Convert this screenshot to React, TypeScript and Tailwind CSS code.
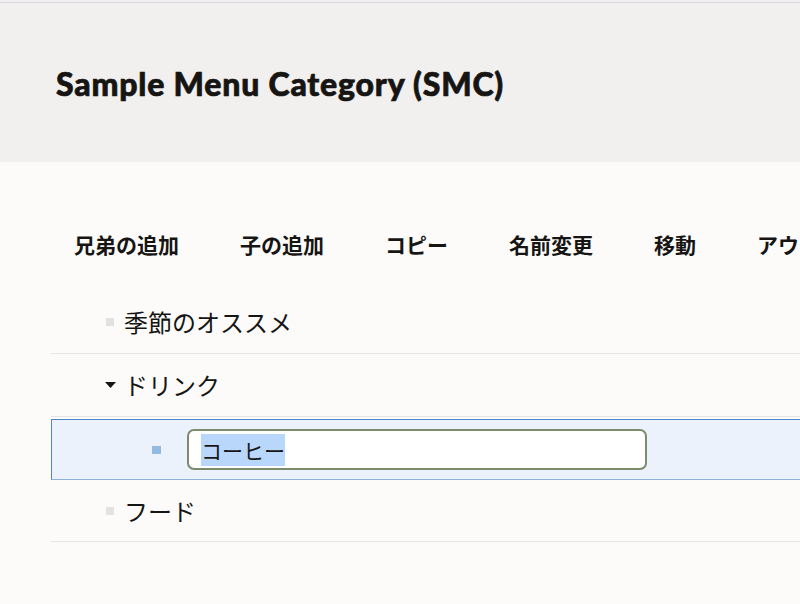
import React from 'react'

const jp = { fontFamily: '"Noto Sans CJK JP", "Noto Sans", sans-serif' }

const actions = ['兄弟の追加', '子の追加', 'コピー', '名前変更', '移動', 'アウトラインの展開']

function Bullet({ selected }: { selected?: boolean }) {
  return (
    <span
      className={
        selected
          ? 'inline-block w-[9px] h-[8px] bg-[#92bbe3]'
          : 'inline-block w-[8px] h-[8px] bg-[#e3e2e0]'
      }
    />
  )
}

function Caret() {
  return (
    <svg width="11" height="6" viewBox="0 0 11 6" className="block">
      <path d="M0 0 L11 0 L5.5 6 Z" fill="#161513" />
    </svg>
  )
}

export default function App() {
  return (
    <div className="min-h-[604px] w-full overflow-hidden bg-[#fcfbfa] text-[#161513]">
      {/* Header */}
      <div className="bg-[#f1f0ee] pt-[2px]">
        <div className="border-t border-[#d9d7e1] h-[160px] flex items-center pl-[56px]">
          <h1
            className="text-[32px] font-black leading-none pt-[3px] tracking-[0.8px] [-webkit-text-stroke:0.7px_#161513]"
            style={{ fontFamily: 'Lato, "Liberation Sans", sans-serif' }}
          >
            Sample Menu Category (SMC)
          </h1>
        </div>
      </div>

      {/* Toolbar */}
      <div className="pl-[74px] pt-[67px] flex gap-[61px] whitespace-nowrap" style={jp}>
        {actions.map((a) => (
          <button key={a} className="text-[21px] font-bold leading-[30px]">
            {a}
          </button>
        ))}
      </div>

      {/* Tree */}
      <div className="ml-[51px] w-[1000px] mt-[32px]" style={jp}>
        <div className="h-[63px] border-b border-[#e5e4e2] flex items-center pl-[55px] gap-[10px]">
          <Bullet />
          <span className="text-[24px] font-normal leading-none">季節のオススメ</span>
        </div>
        <div className="h-[63px] border-b border-[#e5e4e2] flex items-center pl-[54px] gap-[8px]">
          <Caret />
          <span className="text-[24px] font-normal leading-none">ドリンク</span>
        </div>
        <div className="mt-[2px] h-[61px] border border-[#4d87d4] border-b-[#8db0e0] bg-[#ebf2fb] flex items-center pl-[100px]">
          <Bullet selected />
          <div className="ml-[26px] w-[460px] h-[41px] rounded-[7px] border-2 border-[#7b8b6c] bg-white flex items-center pl-[12px]">
            <span className="text-[21px] font-normal leading-[32px] bg-[#b9d6fb]">コーヒー</span>
          </div>
        </div>
        <div className="h-[62px] border-b border-[#e5e4e2] flex items-center pl-[55px] gap-[10px]">
          <Bullet />
          <span className="text-[24px] font-normal leading-none">フード</span>
        </div>
      </div>
    </div>
  )
}
